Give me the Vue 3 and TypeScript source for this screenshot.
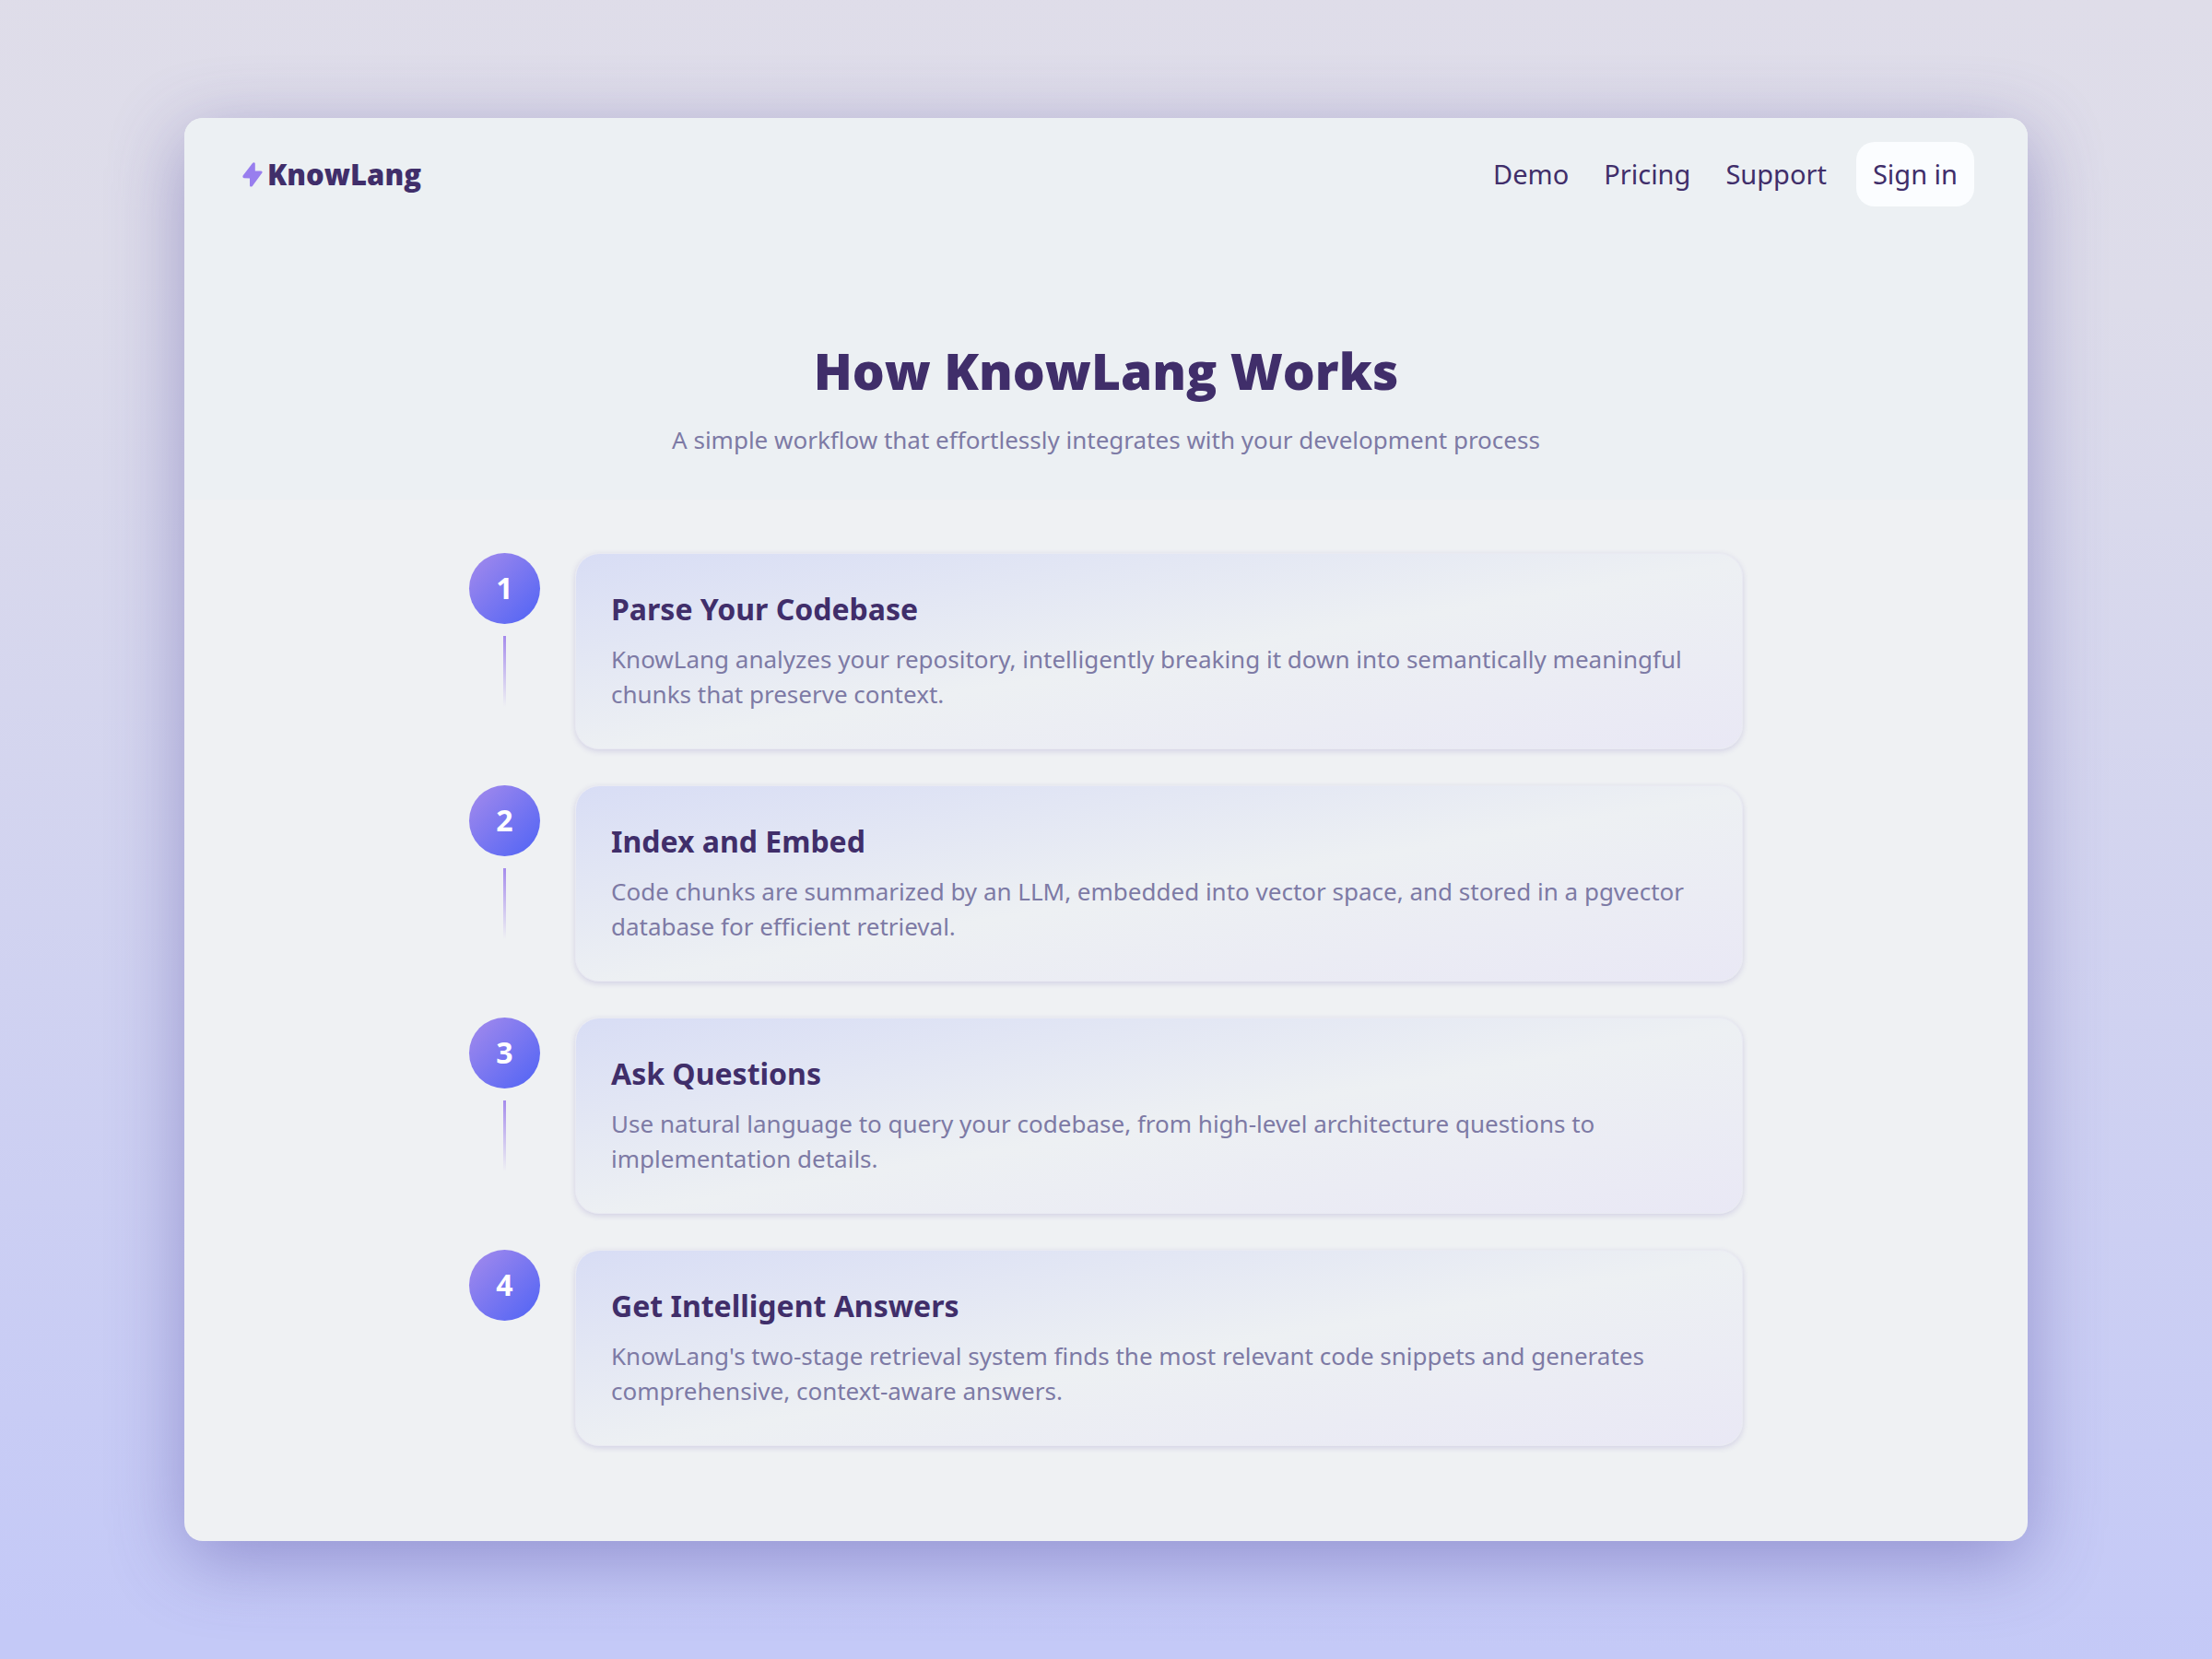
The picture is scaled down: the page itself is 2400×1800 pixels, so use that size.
<script setup lang="ts">
interface NavLink {
  label: string
  href: string
}

interface Step {
  title: string
  text: string
}

const links: NavLink[] = [
  { label: 'Demo', href: '#demo' },
  { label: 'Pricing', href: '#pricing' },
  { label: 'Support', href: '#support' },
]

const steps: Step[] = [
  {
    title: 'Parse Your Codebase',
    text: 'KnowLang analyzes your repository, intelligently breaking it down into semantically meaningful chunks that preserve context.',
  },
  {
    title: 'Index and Embed',
    text: 'Code chunks are summarized by an LLM, embedded into vector space, and stored in a pgvector database for efficient retrieval.',
  },
  {
    title: 'Ask Questions',
    text: 'Use natural language to query your codebase, from high-level architecture questions to implementation details.',
  },
  {
    title: 'Get Intelligent Answers',
    text: "KnowLang's two-stage retrieval system finds the most relevant code snippets and generates comprehensive, context-aware answers.",
  },
]
</script>

<template>
  <div class="backdrop">
    <div class="window">
      <div class="top">
        <header class="bar">
          <a class="brand" href="#home">
            <svg class="bolt" viewBox="0 0 22 27" aria-hidden="true">
              <path
                d="M11.2 0.8 L0.6 14.6 Q-0.2 16.8 1.8 17.2 L8 17.4 L8 25.4 Q8.8 27.4 10.8 26 L21.4 11.6 Q22.2 9.8 20.2 9.4 L13.8 9.4 L13.8 1.4 Q13 -0.8 11.2 0.8 Z"
              />
            </svg>
            <span>KnowLang</span>
          </a>
          <nav class="nav">
            <a v-for="link in links" :key="link.label" class="link" :href="link.href">{{ link.label }}</a>
            <button class="signin" type="button">Sign in</button>
          </nav>
        </header>
        <section class="hero">
          <h1>How KnowLang Works</h1>
          <p>A simple workflow that effortlessly integrates with your development process</p>
        </section>
      </div>
      <ol class="steps">
        <li v-for="(step, i) in steps" :key="step.title" class="step">
          <div class="marker">
            <span class="number">{{ i + 1 }}</span>
            <span v-if="i < steps.length - 1" class="line"></span>
          </div>
          <article class="card">
            <h2>{{ step.title }}</h2>
            <p>{{ step.text }}</p>
          </article>
        </li>
      </ol>
    </div>
  </div>
</template>

<style>
body {
  margin: 0;
}
</style>

<style scoped>
.backdrop {
  box-sizing: border-box;
  min-height: 100vh;
  padding: 128px 200px;
  background: linear-gradient(181deg, #dfdde9 0%, #dddcea 18%, #c4c9f7 98%);
  font-family: 'Noto Sans', sans-serif;
  color: #402e6a;
}

.window {
  overflow: hidden;
  min-height: calc(100vh - 256px);
  border-radius: 20px;
  background: #eff1f3;
  box-shadow: 0 20px 80px rgba(80, 70, 160, 0.44);
}

.top {
  padding-bottom: 46px;
  background: #ecf0f3;
}

.bar {
  display: flex;
  align-items: center;
  justify-content: space-between;
  padding: 26px 58px 0 63px;
}

.brand {
  display: flex;
  align-items: center;
  gap: 5px;
  color: inherit;
  font-family: 'Open Sans', sans-serif;
  font-size: 31px;
  font-weight: 800;
  line-height: 38px;
  text-decoration: none;
}

.bolt {
  width: 22px;
  height: 27px;
  fill: #987eee;
}

.nav {
  display: flex;
  align-items: center;
  font-size: 29px;
  line-height: 38px;
}

.link {
  margin-right: 38px;
  color: inherit;
  text-decoration: none;
}

.link:last-of-type {
  margin-right: 32px;
}

.signin {
  padding: 16px 18px;
  border: 0;
  border-radius: 20px;
  background: #fbfdff;
  color: inherit;
  font: inherit;
}

.hero {
  padding-top: 140px;
  text-align: center;
}

.hero h1 {
  margin: 0;
  font-family: 'Open Sans', sans-serif;
  font-size: 55px;
  font-weight: 800;
  line-height: 76px;
}

.hero p {
  margin: 18px 0 0;
  color: #7d7aa5;
  font-size: 26px;
  line-height: 38px;
}

.steps {
  display: flex;
  flex-direction: column;
  gap: 39px;
  max-width: 1382px;
  margin: 0 auto;
  padding: 58px 0 100px;
  list-style: none;
}

.step {
  display: flex;
  gap: 38px;
}

.marker {
  display: flex;
  flex: none;
  flex-direction: column;
  align-items: center;
  gap: 13px;
}

.number {
  width: 77px;
  height: 77px;
  border-radius: 50%;
  background: linear-gradient(135deg, #a58bec 0%, #4f63f5 100%);
  color: #fff;
  font-size: 32px;
  font-weight: 700;
  line-height: 76px;
  text-align: center;
}

.line {
  width: 3px;
  height: 77px;
  background: linear-gradient(#a58bec, rgba(165, 139, 236, 0));
}

.card {
  flex: 1;
  box-sizing: border-box;
  padding: 40px 38px;
  border: 1px solid rgba(228, 228, 242, 0.5);
  border-radius: 26px;
  background: linear-gradient(to bottom right, #d8ddf5 0%, #edf0f3 52%, #e9e8f5 100%) padding-box;
  box-shadow: 0 2px 6px rgba(80, 60, 160, 0.18);
}

.card h2 {
  margin: 0 0 15px;
  font-size: 32px;
  font-weight: 700;
  line-height: 40px;
}

.card p {
  margin: 0;
  color: #7d7aa5;
  font-size: 26px;
  line-height: 38px;
}
</style>
